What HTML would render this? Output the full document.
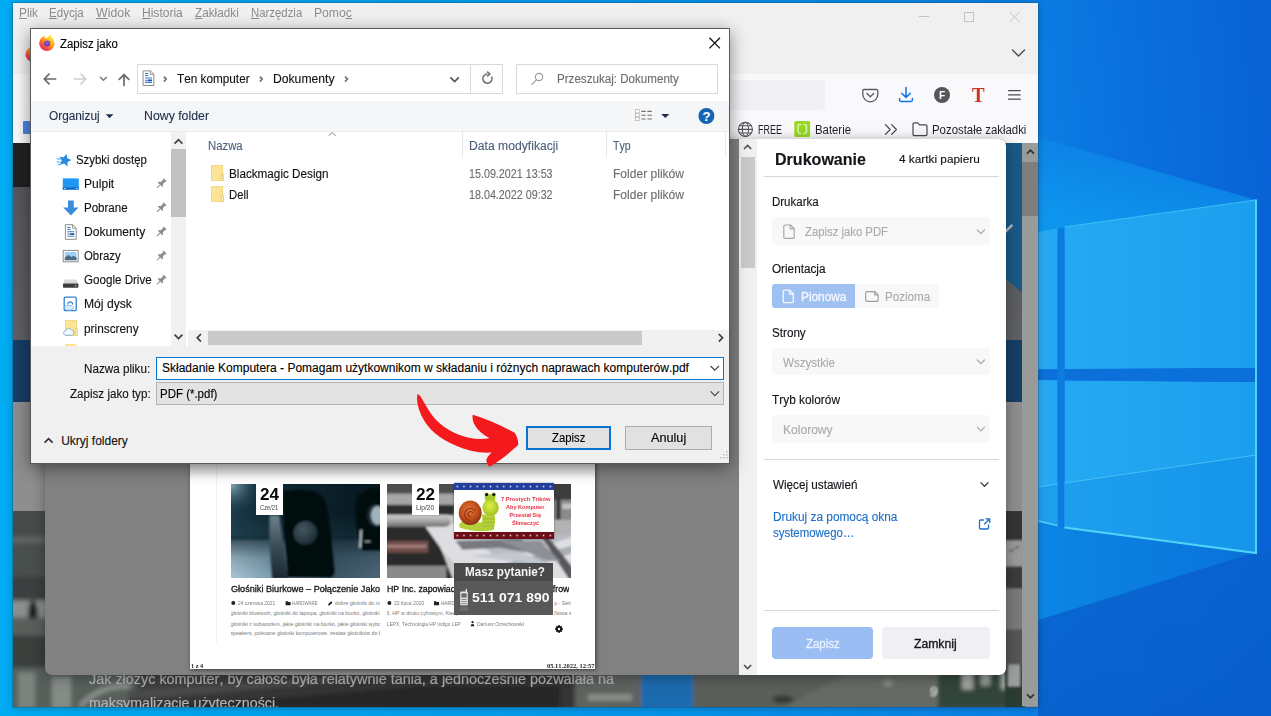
<!DOCTYPE html>
<html lang="pl"><head><meta charset="utf-8"><title>Zapisz jako</title>
<style>
html,body{margin:0;padding:0;}
body{width:1271px;height:716px;overflow:hidden;background:#0a78de;font-family:"Liberation Sans",sans-serif;}
#screen{position:relative;width:1271px;height:716px;overflow:hidden;}
#screen *{box-sizing:border-box;}
.abs,.t,.wall,svg.i{position:absolute;}
.wall{left:0;top:0;}
.t{white-space:nowrap;line-height:1;transform-origin:0 0;font-kerning:none;}
u{text-decoration:underline;text-underline-offset:1px;}

#savedialog .t{-webkit-text-stroke:.12px currentColor;}
#printsettings .t{-webkit-text-stroke:.15px currentColor;}

</style></head>
<body>
<div id="screen">
<svg class="wall" width="1271" height="716" viewBox="0 0 1271 716">
<defs>
<linearGradient id="wg" x1="0" y1="0" x2="1271" y2="0" gradientUnits="userSpaceOnUse">
<stop offset="0" stop-color="#00acf2"/><stop offset="0.02" stop-color="#00aaf0"/><stop offset="0.4" stop-color="#069ceb"/><stop offset="0.82" stop-color="#0b7ee4"/><stop offset="0.9" stop-color="#0a70de"/><stop offset="1" stop-color="#0863d6"/>
</linearGradient>
<linearGradient id="wv" x1="0" y1="0" x2="0" y2="716" gradientUnits="userSpaceOnUse">
<stop offset="0" stop-color="#0450c0" stop-opacity="0.06"/><stop offset="0.3" stop-color="#0450c0" stop-opacity="0"/><stop offset="0.75" stop-color="#0450c0" stop-opacity="0"/><stop offset="1" stop-color="#0448b8" stop-opacity="0.45"/>
</linearGradient>
<linearGradient id="beam1" x1="1120" y1="160" x2="1100" y2="232" gradientUnits="userSpaceOnUse">
<stop offset="0" stop-color="#0c84e6"/><stop offset="1" stop-color="#0e96ee"/>
</linearGradient>
<linearGradient id="pane" x1="1038" y1="0" x2="1256" y2="0" gradientUnits="userSpaceOnUse">
<stop offset="0" stop-color="#27aaf3"/><stop offset="1" stop-color="#1a9fee"/>
</linearGradient>
<linearGradient id="pane2" x1="1038" y1="0" x2="1256" y2="0" gradientUnits="userSpaceOnUse">
<stop offset="0" stop-color="#1f9fee"/><stop offset="1" stop-color="#1596ea"/>
</linearGradient>
<linearGradient id="beam2" x1="1038" y1="0" x2="1256" y2="0" gradientUnits="userSpaceOnUse">
<stop offset="0" stop-color="#0b86e4"/><stop offset="1" stop-color="#0a72da"/>
</linearGradient>
</defs>
<rect width="1271" height="716" fill="url(#wg)"/>
<rect x="1038" width="233" height="716" fill="url(#wv)"/>
<!-- dark floor lower right -->
<polygon points="1038,620 1257,552 1271,548 1271,716 1038,716" fill="#0a62cc" opacity="0.75"/>
<!-- beams -->
<polygon points="1038,137 1256,200 1256,240 1038,240" fill="url(#beam1)"/>
<polygon points="1038,520 1256,552 1038,620" fill="url(#beam2)"/>
<!-- separators (darker cross) -->
<rect x="1038" y="225" width="219" height="330" fill="#0d74dc" opacity="0"/>
<!-- panes -->
<polygon points="1038,232 1057.5,228.5 1057.5,369 1038,369.5" fill="url(#pane)"/>
<polygon points="1064.5,227 1256,200 1256,368 1064.5,369" fill="url(#pane)"/>
<polygon points="1038,380 1057.5,380 1057.5,525.5 1038,521" fill="url(#pane)"/>
<polygon points="1064.5,380.5 1256,382 1256,553 1064.5,527.5" fill="url(#pane)"/>
<!-- cross bars -->
<polygon points="1038,369.500 1256,368 1256,382 1038,380" fill="#0b70da"/>
<polygon points="1057.500,228.500 1064.500,227 1064.500,527.500 1057.500,525.500" fill="#0d7ce0"/>
<!-- floor reflection in lower panes -->
<polygon points="1038,487 1057.5,484 1057.5,525.5 1038,521" fill="url(#pane2)"/>
<polygon points="1064.5,483 1256,455 1256,553 1064.5,527.5" fill="url(#pane2)"/>
<polyline points="1038,487 1057.5,484" stroke="#46c0f6" stroke-width="1" fill="none"/>
<polyline points="1064.5,483 1256,455" stroke="#46c0f6" stroke-width="1" fill="none"/>
<!-- bright edges -->
<polyline points="1064.5,227 1256,200" stroke="#3cc0f5" stroke-width="1" fill="none"/>
<polyline points="1256,199.5 1256,553 1064.5,527.5" stroke="#4fd4f7" stroke-width="2" fill="none" stroke-linejoin="miter"/>
<polyline points="1038,521 1057.5,525.5" stroke="#4fd4f7" stroke-width="1.5" fill="none"/>
</svg>
<div class="abs" id="ffwin" style="left:13px;top:3px;width:1025px;height:703.7px;background:#f0f0f1;box-shadow:0 0 0 1px rgba(30,60,90,.22),0 1px 7px rgba(0,0,0,.28);overflow:hidden;">
<div class="abs" id="menubar" style="left:0;top:0;width:1025px;height:23px;"><span class="t" style="left:6.00px;top:4.00px;font-size:12px;color:#8b8b8e;transform:scaleX(0.9826);"><u>P</u>lik</span><span class="t" style="left:36.30px;top:4.00px;font-size:12px;color:#8b8b8e;transform:scaleX(0.9634);"><u>E</u>dycja</span><span class="t" style="left:82.70px;top:4.00px;font-size:12px;color:#8b8b8e;transform:scaleX(1.0288);"><u>W</u>idok</span><span class="t" style="left:129.00px;top:4.00px;font-size:12px;color:#8b8b8e;transform:scaleX(1.0030);"><u>H</u>istoria</span><span class="t" style="left:181.90px;top:4.00px;font-size:12px;color:#8b8b8e;transform:scaleX(0.9802);"><u>Z</u>akładki</span><span class="t" style="left:237.80px;top:4.00px;font-size:12px;color:#8b8b8e;transform:scaleX(0.9477);"><u>N</u>arzędzia</span><span class="t" style="left:300.70px;top:4.00px;font-size:12px;color:#8b8b8e;transform:scaleX(1.0121);">Pomo<u>c</u></span></div>
<svg class="i" style="left:11px;top:42px" width="20" height="20" viewBox="24 45 20 20"><defs><linearGradient id="fxb" x1="0.85" y1="0.1" x2="0.2" y2="0.95"><stop offset="0" stop-color="#fff04a"/><stop offset="0.28" stop-color="#ffb92a"/><stop offset="0.55" stop-color="#ff7a20"/><stop offset="0.8" stop-color="#f2404a"/><stop offset="1" stop-color="#e42a78"/></linearGradient><radialGradient id="fxbp" cx="0.55" cy="0.4" r="0.6"><stop offset="0" stop-color="#9560e6"/><stop offset="1" stop-color="#5a30b8"/></radialGradient></defs><g transform="translate(33.2 54.4)"><circle r="7.7" fill="url(#fxb)"/><path d="M-2.6-8.2l1.2 3.4 3.4-1.6 1.2-2.6z" fill="#fff"/><path d="M1.4-6.4q1.2-2 3-2.4q-.6 1.6 0 3z" fill="#ffe23a"/><circle cx="0.2" cy="0.3" r="3" fill="url(#fxbp)"/><path d="M-3.4-1.2q1.2-3 4.2-3.2q-1.6 1-1.4 2.2q-1.8 0-2.8 1z" fill="#ff9a2a"/></g></svg>
<svg class="i" style="left:902px;top:5px" width="112" height="20" viewBox="915 8 112 20" fill="none" stroke="#c4c4c8" stroke-width="1"><path d="M919 16.5h10"/><rect x="964.5" y="12.5" width="9" height="9"/><path d="M1009.5 12l10 10M1019.5 12l-10 10"/></svg>
<svg class="i" style="left:997px;top:43px" width="18" height="14" viewBox="1010 46 18 14" fill="none" stroke="#4a4a4f" stroke-width="1.4" stroke-linecap="round" stroke-linejoin="round"><path d="M1012.5 50l6 6 6-6"/></svg>
<div class="abs" style="left:0px;top:71px;width:1025px;height:43px;background:#f9f9fb;"></div>
<div class="abs" style="left:287px;top:77px;width:525px;height:30px;background:#f0f0f4;border-radius:4px;"></div>
<svg class="i" style="left:845px;top:81px" width="170" height="22" viewBox="858 84 170 22" fill="none" stroke-linecap="round" stroke-linejoin="round">
<path d="M864 89.5h12.6a1.2 1.2 0 0 1 1.2 1.2v3.6a7.5 7.5 0 0 1-15 0v-3.6a1.2 1.2 0 0 1 1.2-1.2z" stroke="#5b5b66" stroke-width="1.3"/>
<path d="M867 93.6l3.3 3.2 3.3-3.2" stroke="#5b5b66" stroke-width="1.4"/>
<path d="M906 87.5v9.6M901.7 93.2l4.3 4.2 4.3-4.2" stroke="#1373e6" stroke-width="1.5"/>
<path d="M899.6 98.4v1.6a1.4 1.4 0 0 0 1.4 1.4h10a1.4 1.4 0 0 0 1.4-1.4v-1.6" stroke="#1373e6" stroke-width="1.5"/>
<circle cx="942" cy="95" r="8" fill="#55555c"/>
<path d="M1008.6 90.6h11.6M1008.6 94.9h11.6M1008.6 99.2h11.6" stroke="#4a4a52" stroke-width="1.3"/>
</svg>
<span class="t" style="left:926.05px;top:87.60px;font-size:10px;color:#fff;font-weight:700;">F</span><span class="t" style="left:959.20px;top:82.00px;font-size:21px;color:#d0311d;font-weight:700;font-family:'Liberation Serif',serif;transform:scaleX(0.8995);">T</span><div class="abs" style="left:0px;top:114px;width:1025px;height:26px;background:#f9f9fb;"></div>
<div class="abs" style="left:10px;top:118px;width:9px;height:13px;background:#4a86e8;border-radius:1px;"></div>
<svg class="i" style="left:723px;top:116px" width="200" height="20" viewBox="736 119 200 20" fill="none" stroke-linecap="round" stroke-linejoin="round">
<g stroke="#55555e" stroke-width="1.1"><circle cx="745.4" cy="129.4" r="7"/><ellipse cx="745.4" cy="129.4" rx="3" ry="7"/><path d="M738.4 129.4h14M739.5 125.8h11.8M739.5 133h11.8"/></g>
<rect x="794.3" y="121" width="15.8" height="16" rx="1.5" fill="#97d826"/>
<rect x="798" y="124.6" width="8.4" height="8.8" rx="1.6" stroke="#dff5a8" stroke-width="1.5"/>
<path d="M802.2 123.6v10.8" stroke="#97d826" stroke-width="2.2"/>
<g stroke="#45454d" stroke-width="1.2"><path d="M885.4 124.6l4.8 4.9-4.8 4.9M891.6 124.6l4.8 4.9-4.8 4.9"/></g>
<path d="M913 124.2a1.3 1.3 0 0 1 1.3-1.3h3.4l1.8 1.9h6.2a1.3 1.3 0 0 1 1.3 1.3v8.2a1.3 1.3 0 0 1-1.3 1.3h-11.4a1.3 1.3 0 0 1-1.3-1.3z" stroke="#45454d" stroke-width="1.2"/>
</svg>
<span class="t" style="left:744.80px;top:120.50px;font-size:12px;color:#1f1f24;transform:scaleX(0.7468);">FREE</span><span class="t" style="left:801.50px;top:120.50px;font-size:12px;color:#1f1f24;transform:scaleX(0.9468);">Baterie</span><span class="t" style="left:918.60px;top:120.50px;font-size:12px;color:#1f1f24;transform:scaleX(0.9498);">Pozostałe zakładki</span><div class="abs" id="content" style="left:0;top:140px;width:1025px;height:564px;background:#8e8e8e;overflow:hidden;">
<div class="abs" style="left:0px;top:0px;width:400px;height:43.5px;background:#212122;"></div>
<div class="abs" style="left:400px;top:0px;width:612px;height:160px;background:#1a5a88;"></div>
<div class="abs" style="left:0px;top:43.5px;width:1012px;height:154px;background:linear-gradient(#57585c,#5e6064);"></div>
<svg class="i" style="left:887px;top:0" width="125" height="160" viewBox="900 143 125 160"><polygon points="900,143 1025,143 1025,295 900,190" fill="#1a5a88"/><path d="M1004 231.500l7.500-7.500 1.600 1.800-7.500 7.500z" fill="#b4bec8"/></svg><div class="abs" style="left:0px;top:197px;width:1012px;height:62px;background:#173e66;"></div>
<div class="abs" style="left:0px;top:367.5px;width:1012px;height:196px;background:#4b4f4c;"></div>
<svg class="i" style="left:0;top:367.5px" width="1009" height="196" viewBox="13 510.5 1009 196">
<defs><filter id="pb" x="-5%" y="-5%" width="110%" height="110%"><feGaussianBlur stdDeviation="2"/></filter>
<filter id="pb1" x="-5%" y="-5%" width="110%" height="110%"><feGaussianBlur stdDeviation="1.1"/></filter>
<linearGradient id="pg1" x1="13" x2="1022" y1="0" y2="0" gradientUnits="userSpaceOnUse"><stop offset="0" stop-color="#4f5553"/><stop offset="0.1" stop-color="#59605b"/><stop offset="0.13" stop-color="#3f4140"/><stop offset="0.3" stop-color="#383838"/><stop offset="0.5" stop-color="#2c2c2c"/><stop offset="0.56" stop-color="#555955"/><stop offset="1" stop-color="#5d625e"/></linearGradient></defs>
<rect x="13" y="510.5" width="1009" height="196" fill="url(#pg1)"/>
<g filter="url(#pb)">
<rect x="10" y="508" width="38" height="30" fill="#464c4a"/>
<rect x="10" y="536" width="38" height="7" fill="#5e6462"/>
<rect x="10" y="543" width="38" height="33" fill="#4a504e"/>
<rect x="10" y="576" width="38" height="24" fill="#3c403f"/>
<rect x="10" y="600" width="38" height="17" fill="#8b8f8d"/>
<ellipse cx="33" cy="614" rx="5" ry="14" fill="#1e201f"/>
<rect x="10" y="618" width="38" height="17" fill="#5a5e5c"/>
<rect x="10" y="635" width="38" height="32" fill="#3b3f3d"/>
<rect x="10" y="667" width="125" height="42" fill="#59605b"/>
<rect x="18" y="672" width="17" height="36" fill="#7c837e"/>
<rect x="52" y="676" width="19" height="32" fill="#858c87"/>
<path d="M80 706q20-22 50-20" stroke="#8a918c" stroke-width="5" fill="none"/>
<polygon points="128,708 128,690 400,672 575,672 575,708" fill="#343434"/>
<polygon points="150,708 420,686 560,686 560,708" fill="#262626"/>
<polygon points="128,700 128,690 400,672 440,672" fill="#4a4c4a"/>
<rect x="575" y="672" width="66" height="36" fill="#5f635f"/>
<rect x="588" y="694" width="44" height="6" fill="#8e928e"/>
<rect x="641" y="666" width="52" height="44" fill="#1c6aae"/>
<rect x="693" y="672" width="330" height="36" fill="#5a5f5a"/>
<polygon points="780,708 850,672 1012,672 1012,708" fill="#656a65"/>
<rect x="938" y="672" width="74" height="36" fill="#33443b"/>
<rect x="962" y="672" width="11" height="17" fill="#a0a4a0"/>
<rect x="981" y="672" width="9" height="13" fill="#9a9e9a"/>
<rect x="1001" y="672" width="11" height="17" fill="#a0a4a0"/>
<ellipse cx="783" cy="699" rx="11" ry="4" fill="#343434"/>
<ellipse cx="888" cy="683" rx="5" ry="2.5" fill="#8c908c"/>
<ellipse cx="1018" cy="699" rx="10" ry="3.5" fill="#3c3c3c"/>
</g>
<g filter="url(#pb1)">
<rect x="1005" y="509" width="18" height="31" fill="#353535"/>
<rect x="1005" y="540" width="18" height="26" fill="#9a9a9a"/>
<path d="M1009 551l5-2M1015 548l4-2" stroke="#3a3a3a" stroke-width="1.2"/>
<rect x="1005" y="566" width="18" height="22" fill="#3a3a3a"/>
<rect x="1005" y="588" width="18" height="41" fill="#7a7a7a"/>
<rect x="1005" y="629" width="18" height="35" fill="#565656"/>
<rect x="1005" y="664" width="18" height="44" fill="#2c3a33"/>
<rect x="1008" y="664" width="12" height="22" fill="#9a9e9c"/>
</g>
<text x="918" y="695" font-family="Liberation Sans, sans-serif" font-weight="700" font-size="15" fill="#c8ccc8" transform="rotate(190 928 690)" filter="url(#pb1)">6</text>
</svg>
<div class="abs" style="left:1008.5px;top:0px;width:17px;height:563px;background:#999a9a;"></div>
<div class="abs" style="left:1008.5px;top:18.5px;width:17px;height:54px;background:#7e7e7f;"></div>
<svg class="i" style="left:1008.5px;top:0" width="17" height="563" viewBox="0 0 17 563" fill="none" stroke="#2e2e2e" stroke-width="1.5"><path d="M5 10.6l3.5-3.5 3.5 3.5"/><path d="M5 551.4l3.5 3.5 3.5-3.5"/></svg><span class="t" style="left:76.00px;top:527.50px;font-size:15px;color:#b2b2b2;transform:scaleX(0.9598);-webkit-text-stroke:.2px #b2b2b2;">Jak złożyć komputer, by całość była relatywnie tania, a jednocześnie pozwalała na</span><span class="t" style="left:76.00px;top:552.20px;font-size:15px;color:#b2b2b2;transform:scaleX(0.9497);-webkit-text-stroke:.2px #b2b2b2;">maksymalizację użyteczności.</span></div>
</div>
<div class="abs" id="printmodal" style="left:45px;top:139px;width:961px;height:535.5px;background:#818181;border-radius:7px;overflow:hidden;box-shadow:0 2px 14px rgba(0,0,0,.35);">
<div class="abs" id="sheet" style="left:145px;top:11px;width:404.5px;height:518.8px;background:#fff;box-shadow:1px 1px 4px rgba(0,0,0,.55);overflow:hidden;">
<div class="abs" style="left:26.30px;top:0.00px;width:1px;height:493px;background:#f3f3f3;"></div>
<div class="abs" style="left:0.00px;top:313.00px;width:405px;height:16px;background:linear-gradient(rgba(0,0,0,.16),rgba(0,0,0,0));"></div>
<svg class="i" style="left:41px;top:334.2px" width="149.3" height="93.5" viewBox="231 484.2 149.3 93.5">
<defs>
<linearGradient id="s1" x1="231" x2="380" y1="0" y2="0" gradientUnits="userSpaceOnUse"><stop offset="0" stop-color="#1b3a48"/><stop offset="0.3" stop-color="#0e2732"/><stop offset="1" stop-color="#071821"/></linearGradient>
<linearGradient id="s2" x1="231" x2="380" y1="0" y2="0" gradientUnits="userSpaceOnUse"><stop offset="0" stop-color="#a9c6d4"/><stop offset="0.28" stop-color="#7b9db0"/><stop offset="0.7" stop-color="#3d5666"/><stop offset="1" stop-color="#4b6778"/></linearGradient>
<linearGradient id="s3" x1="0" x2="0" y1="538" y2="578" gradientUnits="userSpaceOnUse"><stop offset="0" stop-color="#10242e" stop-opacity=".75"/><stop offset="0.5" stop-color="#10242e" stop-opacity=".2"/><stop offset="1" stop-color="#10242e" stop-opacity="0"/></linearGradient>
<radialGradient id="s4" cx="232" cy="485" r="30" gradientUnits="userSpaceOnUse"><stop offset="0" stop-color="#7fa3b3"/><stop offset="1" stop-color="#1b3a48" stop-opacity="0"/></radialGradient>
<linearGradient id="s5" x1="0" x2="0" y1="515" y2="543" gradientUnits="userSpaceOnUse"><stop offset="0" stop-color="#2a5262" stop-opacity="0"/><stop offset="1" stop-color="#2a5262" stop-opacity=".3"/></linearGradient>
<linearGradient id="s6" x1="0" x2="0" y1="515" y2="578" gradientUnits="userSpaceOnUse"><stop offset="0" stop-color="#6c828c"/><stop offset="0.5" stop-color="#3a4c56"/><stop offset="1" stop-color="#1c2a32"/></linearGradient>
<radialGradient id="s7" cx="0.38" cy="0.34" r="0.75"><stop offset="0" stop-color="#42565f"/><stop offset="0.7" stop-color="#26363e"/><stop offset="1" stop-color="#121c22"/></radialGradient>
<filter id="sb"><feGaussianBlur stdDeviation="0.8"/></filter>
</defs>
<rect x="231" y="484" width="150" height="95" fill="url(#s1)"/>
<rect x="231" y="515" width="150" height="28" fill="url(#s5)"/>
<rect x="231" y="484" width="40" height="40" fill="url(#s4)"/>
<g filter="url(#sb)">
<rect x="229" y="540" width="153" height="40" fill="url(#s2)"/>
<rect x="229" y="538" width="153" height="42" fill="url(#s3)"/>
<path d="M279.300 515.500l-9.800 0q-1 30 2.500 64l16 0z" fill="url(#s6)"/>
<path d="M283.500 493q4-3 21.500-2.300q16 .6 20.500 11.500q6 30 9.300 68q.4 6-4 8l-43 0q-4.500-40-4.300-85.200z" fill="#03070b"/>
<circle cx="305.600" cy="533.400" r="12.100" fill="url(#s7)"/>
<path d="M356.200 500q4-11 25-12v63l-19 0q-8-24-6-51z" fill="#05090d"/>
<ellipse cx="375.500" cy="515.600" rx="8.500" ry="11.500" fill="#1a2a32"/>
<ellipse cx="377.500" cy="515.600" rx="6.500" ry="9.500" fill="#9fb4be"/>
<path d="M360.300 530l1.600 0 -.8 18-1.800 0z" fill="#cfd9de"/>
<path d="M364.500 541.600h6" stroke="#b9c6cc" stroke-width="1"/>
</g>
</svg>
<svg class="i" style="left:196.6px;top:334.2px" width="184.1" height="93.5" viewBox="386.6 484.2 184.1 93.5">
<defs><filter id="pb2"><feGaussianBlur stdDeviation="1.3"/></filter>
<linearGradient id="p1" x1="0" x2="0" y1="515" y2="527" gradientUnits="userSpaceOnUse"><stop offset="0" stop-color="#d0d0d0"/><stop offset="0.5" stop-color="#a8a8a8"/><stop offset="1" stop-color="#6a6a6a"/></linearGradient></defs>
<rect x="386" y="484" width="186" height="95" fill="#c9c9cb"/>
<g filter="url(#pb2)">
<polygon points="420,528 575,510 575,580 470,580" fill="#dedee2"/>
<polygon points="480,545 575,520 575,536 500,560" fill="#b8bcc4"/>
<polygon points="500,565 575,545 575,552 520,572" fill="#a9adb5"/>
<rect x="384" y="482" width="190" height="12" fill="#4e4e4e"/>
<rect x="384" y="494" width="70" height="11" fill="#a6a6a6"/>
<rect x="384" y="505" width="70" height="10" fill="#2e2e2e"/>
<rect x="454" y="494" width="120" height="30" fill="#7c7c7c"/>
<rect x="384" y="515" width="66" height="12" rx="5" fill="url(#p1)"/>
<polygon points="384,527 425,527 440,548 452,580 384,580" fill="#2b2b2b"/>
<rect x="386" y="541" width="42" height="12" fill="#6e4d49"/>
<rect x="386" y="545" width="40" height="3" fill="#a8807a"/>
<rect x="384" y="566" width="62" height="14" fill="#8a8a8a"/>
<rect x="552" y="482" width="24" height="19" fill="#3c3c3c"/>
<rect x="552" y="500" width="24" height="21" fill="#8a8a8a"/>
<rect x="556" y="498" width="4" height="22" fill="#303030"/>
<rect x="562" y="504" width="14" height="5" fill="#c4c4c4"/>
<rect x="552" y="520" width="24" height="15" fill="#b2b2b4"/>
<polygon points="541,537 546,535 575,571 575,580 569,580" fill="#58585c"/>
<polygon points="455,541 520,539 548,556 500,548 462,550" fill="#77797f"/>
<polygon points="500,541 540,541 560,562 545,560" fill="#8d9097"/>
<polygon points="470,556 520,552 552,566 520,562" fill="#c2c7d0"/>
</g>
</svg>
<div class="abs" style="left:65.60px;top:334.20px;width:27.3px;height:30.8px;background:#fff;"></div>
<span class="t" style="left:69.80px;top:336.60px;font-size:16px;color:#0a0a0a;font-weight:700;transform:scaleX(1.0676);">24</span><span class="t" style="left:70.05px;top:354.80px;font-size:6.3px;color:#444;transform:scaleX(0.9168);">Cze/21</span><div class="abs" style="left:221.80px;top:334.20px;width:27.3px;height:30.8px;background:#fff;"></div>
<span class="t" style="left:226.00px;top:336.60px;font-size:16px;color:#0a0a0a;font-weight:700;transform:scaleX(1.0676);">22</span><span class="t" style="left:226.25px;top:354.80px;font-size:6.3px;color:#444;transform:scaleX(1.0661);">Lip/20</span><div class="abs" style="left:40.00px;top:430.00px;width:150.3px;height:16px;overflow:hidden;"><span class="t" style="left:0.50px;top:3.80px;font-size:9.4px;color:#141414;transform:scaleX(0.9732);-webkit-text-stroke:.3px #141414;">Głośniki Biurkowe – Połączenie Jakości</span></div>
<div class="abs" style="left:196.00px;top:430.00px;width:183.3px;height:16px;overflow:hidden;"><span class="t" style="left:0.60px;top:3.80px;font-size:9.4px;color:#141414;transform:scaleX(0.9411);-webkit-text-stroke:.3px #141414;">HP Inc. zapowiada nowe prasy w druku cyfrowym</span></div>
<span class="t" style="left:48.00px;top:450.90px;font-size:5.2px;color:#7b7b7b;transform:scaleX(0.9488);">24 czerwca 2021</span><span class="t" style="left:102.30px;top:450.90px;font-size:5.2px;color:#7b7b7b;transform:scaleX(0.8472);">HARDWARE</span><div class="abs" style="left:145.00px;top:448.90px;width:45.3px;height:9px;overflow:hidden;"><span class="t" style="left:0.00px;top:2.00px;font-size:5.2px;color:#7b7b7b;">dobre głośniki do monitora,</span></div>
<div class="abs" style="left:40.50px;top:459.00px;width:149.8px;height:9px;overflow:hidden;"><span class="t" style="left:0.00px;top:2.00px;font-size:5.2px;color:#7b7b7b;">głośniki bluetooth, głośniki do laptopa, głośniki na biurko, głośniki</span></div>
<div class="abs" style="left:40.50px;top:469.50px;width:149.8px;height:9px;overflow:hidden;"><span class="t" style="left:0.00px;top:2.00px;font-size:5.2px;color:#7b7b7b;">głośniki z subwoofem, jakie głośniki na biurko, jakie głośniki wybo</span></div>
<div class="abs" style="left:40.50px;top:479.40px;width:149.8px;height:9px;overflow:hidden;"><span class="t" style="left:0.00px;top:2.00px;font-size:5.2px;color:#7b7b7b;">speakers, polecane głośniki komputerowe, zestaw głośników do ko</span></div>
<span class="t" style="left:204.30px;top:450.90px;font-size:5.2px;color:#7b7b7b;transform:scaleX(0.9859);">22 lipca 2020</span><div class="abs" style="left:250.60px;top:448.90px;width:130px;height:9px;overflow:hidden;"><span class="t" style="left:0.00px;top:2.00px;font-size:5.2px;color:#7b7b7b;">HARDWARE</span></div>
<div class="abs" style="left:364.20px;top:448.90px;width:16.5px;height:9px;overflow:hidden;"><span class="t" style="left:0.00px;top:2.00px;font-size:5.2px;color:#7b7b7b;">p - Seria</span></div>
<div class="abs" style="left:196.60px;top:459.00px;width:70px;height:9px;overflow:hidden;"><span class="t" style="left:0.00px;top:2.00px;font-size:5.2px;color:#7b7b7b;">6, HP w druku cyfrowym, Kiedy</span></div>
<div class="abs" style="left:364.20px;top:459.00px;width:16.5px;height:9px;overflow:hidden;"><span class="t" style="left:0.00px;top:2.00px;font-size:5.2px;color:#7b7b7b;">Nowa se</span></div>
<span class="t" style="left:196.60px;top:471.50px;font-size:5.2px;color:#7b7b7b;transform:scaleX(0.9241);">LEPX, Technologia HP Indigo LEP</span><span class="t" style="left:286.50px;top:471.50px;font-size:5.2px;color:#7b7b7b;transform:scaleX(0.9604);">Dariusz Orzechowski</span><svg class="i" style="left:40px;top:449px" width="260" height="30" viewBox="230 598 260 30" fill="#222">
<circle cx="233.3" cy="602" r="2"/><circle cx="389.4" cy="602" r="2"/>
<path d="M285.6 600.2h2l.8.9h2.2v3.2h-5z"/><path d="M434 600.2h2l.8.9h2.2v3.2h-5z"/>
<path d="M328 603.6l2.6-3.2 1.6.6-.4 1.6-3 2.2z"/>
<circle cx="472.5" cy="621.2" r="1.1"/><path d="M470.6 625.2a1.9 2.2 0 0 1 3.8 0z"/>
</svg>
<div class="abs" style="left:263.90px;top:333.00px;width:99.8px;height:55.6px;background:#fdfdfb;box-shadow:0 0 2px rgba(0,0,0,.4);"></div>
<div class="abs" style="left:263.90px;top:333.00px;width:99.8px;height:6.6px;background:#233f9e;background-image:radial-gradient(circle,#e8ecff 0,#e8ecff .8px,transparent 1.1px);background-size:6.65px 6.6px;"></div>
<div class="abs" style="left:263.90px;top:382.00px;width:99.8px;height:6.6px;background:#6d0d17;background-image:radial-gradient(circle,#f0dede 0,#f0dede .8px,transparent 1.1px);background-size:6.65px 6.6px;"></div>
<svg class="i" style="left:265px;top:340px" width="46" height="42" viewBox="455 490 46 42">
<defs><radialGradient id="sh" cx="0.45" cy="0.4" r="0.6"><stop offset="0" stop-color="#e27a3a"/><stop offset="0.6" stop-color="#c4501c"/><stop offset="1" stop-color="#8a3210"/></radialGradient>
<radialGradient id="gr" cx="0.45" cy="0.4" r="0.6"><stop offset="0" stop-color="#dff04a"/><stop offset="1" stop-color="#9fc21f"/></radialGradient><filter id="snb"><feGaussianBlur stdDeviation="0.35"/></filter></defs>
<g filter="url(#snb)">
<path d="M459.500 527.500q-1.500-5 4-6l18.500 1q.5-4 0-8l12.500 0q1.500 8-1 15.500q-16 3.500-34-2.500z" fill="#b4d038"/>
<path d="M483 518.800h11.500M482.500 522.400h12M482 526h12" stroke="#92b222" stroke-width=".7" fill="none"/>
<path d="M484.600 494.600q0-2 2-2q1.600 0 1.900 1.600l3.300 0q.3-1.600 1.900-1.600q2 0 2 2l-.8 7-9.500 0z" fill="#a9cb2c"/>
<circle cx="490.600" cy="507.600" r="8.200" fill="url(#gr)"/>
<circle cx="486.600" cy="494.600" r="1.600" fill="#161616"/><circle cx="493.800" cy="494.600" r="1.600" fill="#161616"/>
<ellipse cx="470.200" cy="512.800" rx="11.500" ry="12.200" fill="url(#sh)"/>
<path d="M470.500 520.500a6 6 0 1 1 5-9.500M470.500 516.800a2.600 2.600 0 1 1 2.400-3.800" fill="none" stroke="#8e3512" stroke-width="1.100"/>
</g></svg>
<span class="t" style="left:310.60px;top:347.00px;font-size:5.6px;color:#e0344a;font-weight:700;transform:scaleX(1.0241);">7 Prostych Trików</span><span class="t" style="left:316.10px;top:354.90px;font-size:5.6px;color:#e0344a;font-weight:700;transform:scaleX(0.9953);">Aby Komputer</span><span class="t" style="left:319.60px;top:362.60px;font-size:5.6px;color:#e0344a;font-weight:700;">Przestał Się</span><span class="t" style="left:321.70px;top:370.60px;font-size:5.6px;color:#e0344a;font-weight:700;transform:scaleX(1.0043);">Ślimaczyć</span><div class="abs" style="left:264.00px;top:413.00px;width:99.4px;height:52.2px;background:#585858;"></div>
<div class="abs" style="left:264.00px;top:413.00px;width:99.4px;height:18.2px;background:#494949;"></div>
<span class="t" style="left:275.00px;top:415.60px;font-size:12.8px;color:#f4f4f4;font-weight:700;transform:scaleX(0.9144);">Masz pytanie?</span><span class="t" style="left:282.00px;top:440.80px;font-size:13.6px;color:#fafafa;font-weight:700;transform:scaleX(1.0234);">511 071 890</span><svg class="i" style="left:268px;top:437px" width="12" height="26" viewBox="458 587 12 26">
<rect x="460.2" y="591.6" width="7.6" height="13.6" rx="1" fill="#e4e4e4"/><rect x="465.6" y="589" width="1.4" height="3.4" fill="#e4e4e4"/>
<rect x="461.4" y="593.4" width="5.2" height="4.2" fill="#6a6a6a"/><rect x="461.4" y="599" width="5.2" height="1" fill="#888"/><rect x="461.4" y="601" width="5.2" height="1" fill="#888"/><rect x="461.4" y="603" width="5.2" height="1" fill="#888"/>
<rect x="460.2" y="606.4" width="7.6" height="4.4" fill="#6c6c6c"/></svg>
<svg class="i" style="left:363.5px;top:474px" width="10" height="10" viewBox="-5.5 -5.5 11 11"><g fill="#111"><circle r="3.1"/><rect x="-1" y="-4.2" width="2" height="8.4" transform="rotate(0)"/><rect x="-1" y="-4.2" width="2" height="8.4" transform="rotate(45)"/><rect x="-1" y="-4.2" width="2" height="8.4" transform="rotate(90)"/><rect x="-1" y="-4.2" width="2" height="8.4" transform="rotate(135)"/></g><circle r="1.3" fill="#fff"/></svg>
<span class="t" style="left:0.60px;top:512.70px;font-size:6.4px;color:#222;font-weight:700;font-family:'Liberation Serif',serif;transform:scaleX(0.9887);">1 z 4</span><span class="t" style="left:356.80px;top:512.90px;font-size:6.4px;color:#222;font-weight:700;font-family:'Liberation Serif',serif;transform:scaleX(1.0142);">05.11.2022, 12:57</span></div>
<div class="abs" style="left:694px;top:0px;width:17.5px;height:536px;background:#f0f0f0;"></div>
<div class="abs" style="left:695.5px;top:17.5px;width:14.5px;height:111px;background:#c9c9c9;"></div>
<svg class="i" style="left:694px;top:0" width="17" height="536" viewBox="0 0 17 536" fill="none" stroke="#505050" stroke-width="1.6"><path d="M5 10l3.6-3.6 3.6 3.6"/><path d="M5 526l3.6 3.6 3.6-3.6"/></svg>
<div class="abs" id="printsettings" style="left:711.5px;top:0;width:249.5px;height:535.5px;background:#fff;">
<span class="t" style="left:18.50px;top:12.00px;font-size:17px;color:#15141a;font-weight:700;transform:scaleX(0.9444);">Drukowanie</span><span class="t" style="left:142.80px;top:14.60px;font-size:11.5px;color:#15141a;transform:scaleX(1.0264);">4 kartki papieru</span><div class="abs" style="left:7.5px;top:37px;width:234.5px;height:1px;background:#d7d7db;"></div>
<span class="t" style="left:15.90px;top:56.60px;font-size:12.5px;color:#15141a;transform:scaleX(0.9190);">Drukarka</span><div class="abs" style="left:15.899999999999977px;top:78.4px;width:217.6px;height:27.2px;background:#f8f8f9;border-radius:4px;"></div>
<span class="t" style="left:48.50px;top:85.80px;font-size:13px;color:#ababab;transform:scaleX(0.8704);">Zapisz jako PDF</span><span class="t" style="left:15.90px;top:124.20px;font-size:12.5px;color:#15141a;transform:scaleX(0.9373);">Orientacja</span><div class="abs" style="left:15.899999999999977px;top:145.39999999999998px;width:166.2px;height:23.2px;background:#f8f8f9;border-radius:3px;"></div>
<div class="abs" style="left:15.899999999999977px;top:145.39999999999998px;width:82.9px;height:23.2px;background:#9fc1f1;border-radius:3px 0 0 3px;"></div>
<span class="t" style="left:44.90px;top:151.50px;font-size:12.5px;color:#f2f7fe;transform:scaleX(0.9447);-webkit-text-stroke:.35px #f2f7fe;">Pionowa</span><span class="t" style="left:128.00px;top:151.50px;font-size:12.5px;color:#ababab;transform:scaleX(0.9273);">Pozioma</span><span class="t" style="left:15.90px;top:188.00px;font-size:12.5px;color:#15141a;transform:scaleX(0.9328);">Strony</span><div class="abs" style="left:15.899999999999977px;top:209.39999999999998px;width:217.6px;height:26.4px;background:#f8f8f9;border-radius:4px;"></div>
<span class="t" style="left:26.00px;top:216.70px;font-size:13px;color:#ababab;transform:scaleX(0.8889);">Wszystkie</span><span class="t" style="left:15.90px;top:254.80px;font-size:12.5px;color:#15141a;transform:scaleX(0.9504);">Tryb kolorów</span><div class="abs" style="left:15.899999999999977px;top:276.4px;width:217.6px;height:27.6px;background:#f8f8f9;border-radius:4px;"></div>
<span class="t" style="left:26.00px;top:283.50px;font-size:13px;color:#ababab;transform:scaleX(0.9276);">Kolorowy</span><div class="abs" style="left:7.5px;top:320px;width:234.5px;height:1px;background:#d7d7db;"></div>
<span class="t" style="left:16.10px;top:339.60px;font-size:12.5px;color:#15141a;transform:scaleX(0.9345);">Więcej ustawień</span><span class="t" style="left:16.10px;top:371.80px;font-size:12.5px;color:#1f70c8;transform:scaleX(0.9473);">Drukuj za pomocą okna</span><span class="t" style="left:16.10px;top:387.90px;font-size:12.5px;color:#1f70c8;transform:scaleX(0.9154);">systemowego…</span><div class="abs" style="left:7.5px;top:471.20000000000005px;width:234.5px;height:1px;background:#d7d7db;"></div>
<div class="abs" style="left:15.899999999999977px;top:488.29999999999995px;width:100.6px;height:31.7px;background:#9abef3;border-radius:4px;"></div>
<span class="t" style="left:49.20px;top:499.00px;font-size:12.5px;color:#e9f1fd;transform:scaleX(0.9153);-webkit-text-stroke:.3px #e9f1fd;">Zapisz</span><div class="abs" style="left:125.0px;top:488.29999999999995px;width:108.5px;height:31.7px;background:#f0f0f4;border-radius:4px;"></div>
<span class="t" style="left:157.70px;top:499.00px;font-size:12.5px;color:#15141a;transform:scaleX(0.9735);-webkit-text-stroke:0.35px #15141a;">Zamknij</span><svg class="i" style="left:0;top:0" width="250" height="536" viewBox="756.5 139 250 536" fill="none" stroke-linecap="round" stroke-linejoin="round">
<g stroke="#a8a8ae" stroke-width="1.2">
<path d="M784.5 225h5.6l3.6 3.6v8.6a1.2 1.2 0 0 1-1.2 1.2h-8a1.2 1.2 0 0 1-1.2-1.2v-11a1.2 1.2 0 0 1 1.2-1.2z"/><path d="M789.8 225.2v3.6h3.6"/>
<path d="M976.8 230l3.600 3.600 3.600-3.600"/>
<path d="M976.800 360l3.600 3.600 3.600-3.600"/>
<path d="M976.800 427.200l3.600 3.600 3.600-3.600"/>
</g>
<g stroke="#f2f6fd" stroke-width="1.3">
<path d="M784 290.2h5.2l3.6 3.6v7.6a1.2 1.2 0 0 1-1.2 1.2h-7.6a1.2 1.2 0 0 1-1.2-1.2v-10a1.2 1.2 0 0 1 1.2-1.2z"/><path d="M789 290.4v3.6h3.6"/>
</g>
<g stroke="#9c9ca3" stroke-width="1.2">
<path d="M866.4 291.6h8l3.2 3.2v5.4a1.2 1.2 0 0 1-1.2 1.2h-10a1.2 1.2 0 0 1-1.2-1.2v-7.4a1.2 1.2 0 0 1 1.2-1.2z"/><path d="M874.2 291.8v3.2h3.2"/>
</g>
<path d="M980.400 482.600l3.600 3.600 3.600-3.600" stroke="#3a3a42" stroke-width="1.300"/>
<g stroke="#1f70c8" stroke-width="1.3"><path d="M983 520h-3a1 1 0 0 0-1 1v7a1 1 0 0 0 1 1h7a1 1 0 0 0 1-1v-3"/><path d="M985.4 518.8h3.8v3.8M989 519l-5 5"/></g>
</svg>
</div>
</div>
<div class="abs" id="savedialog" style="left:31px;top:29px;width:698.3px;height:434px;background:#fff;box-shadow:0 0 0 1px #5a5a5c,0 4px 16px 1px rgba(0,0,0,.45);">
<svg class="i" style="left:7px;top:5px" width="18" height="18" viewBox="38 34 18 18" ><defs><linearGradient id="fxa" x1="0.85" y1="0.1" x2="0.2" y2="0.95"><stop offset="0" stop-color="#fff04a"/><stop offset="0.28" stop-color="#ffb92a"/><stop offset="0.55" stop-color="#ff7a20"/><stop offset="0.8" stop-color="#f2404a"/><stop offset="1" stop-color="#e42a78"/></linearGradient><radialGradient id="fxap" cx="0.55" cy="0.4" r="0.6"><stop offset="0" stop-color="#9560e6"/><stop offset="1" stop-color="#5a30b8"/></radialGradient></defs><g transform="translate(46.9 43.2)"><circle r="7.7" fill="url(#fxa)"/><path d="M-2.6-8.2l1.2 3.4 3.4-1.6 1.2-2.6z" fill="#fff"/><path d="M1.4-6.4q1.2-2 3-2.4q-.6 1.6 0 3z" fill="#ffe23a"/><circle cx="0.2" cy="0.3" r="3" fill="url(#fxap)"/><path d="M-3.4-1.2q1.2-3 4.2-3.2q-1.6 1-1.4 2.2q-1.8 0-2.8 1z" fill="#ff9a2a"/></g></svg>
<span class="t" style="left:29.00px;top:8.60px;font-size:12px;color:#000;transform:scaleX(0.9523);">Zapisz jako</span><svg class="i" style="left:675px;top:5px" width="18" height="18" viewBox="706 34 18 18" ><path d="M709.4 37.8l10.6 10.6M720 37.8l-10.6 10.6" stroke="#111" stroke-width="1.3" fill="none"/></svg>
<svg class="i" style="left:9px;top:39px" width="96" height="22" viewBox="40 68 96 22" ><g fill="none" stroke-linecap="round" stroke-linejoin="round" stroke-width="1.7">
<path d="M55.6 79h-11M49 74.2l-4.8 4.8 4.8 4.8" stroke="#6a6a6a"/>
<path d="M74.4 79h11M81 74.2l4.8 4.8-4.8 4.8" stroke="#cfcfcf"/>
<path d="M100.4 77.2l3 3 3-3" stroke="#7a7a7a" stroke-width="1.5"/>
<path d="M124 85.4v-11M119.2 79.4l4.8-4.8 4.8 4.8" stroke="#6a6a6a"/></g></svg>
<div class="abs" style="left:106.00px;top:35.00px;width:366px;height:29.5px;border:1px solid #d9d9d9;background:#fff;"></div>
<div class="abs" style="left:439.00px;top:35.00px;width:1px;height:29.5px;background:#d9d9d9;"></div>
<svg class="i" style="left:109px;top:39px" width="370" height="22" viewBox="140 68 370 22" ><g transform="translate(142.6 70.4)"><path d="M0.5 0.5h7.4l3.4 3.4v11.2h-10.8z" fill="#fff" stroke="#8d8d8d" stroke-width="1"/><path d="M7.7 0.7v3.4h3.4" fill="none" stroke="#8d8d8d" stroke-width=".9"/><path d="M2.4 3.2h3.2M2.4 5.2h3.2" stroke="#2f6fc0" stroke-width="1"/><path d="M2.4 7.6h7M2.4 9.8h7M2.4 12h7" stroke="#3a7bd0" stroke-width="1.1"/><rect x="5.6" y="9.2" width="3.6" height="1.6" fill="#1f4f90"/></g><g fill="none" stroke="#747474" stroke-width="1.600"><path d="M163.800 76.600l2.500 2.500-2.500 2.500"/><path d="M259.800 76.600l2.500 2.500-2.500 2.500"/><path d="M345 76.600l2.500 2.500-2.500 2.500"/></g>
<path d="M450.4 77.4l4.2 4.2 4.2-4.2" fill="none" stroke="#555" stroke-width="1.7"/>
<g fill="none" stroke="#6a6a6a" stroke-width="1.5"><path d="M491.6 76.6a4.6 4.6 0 1 1-4.2-2.6"/><path d="M487.2 71.6l2.6 2.4-2.6 2.4"/></g></svg>
<span class="t" style="left:146.00px;top:43.70px;font-size:12px;color:#111;transform:scaleX(0.9806);">Ten komputer</span><span class="t" style="left:242.00px;top:43.70px;font-size:12px;color:#111;transform:scaleX(1.0133);">Dokumenty</span><div class="abs" style="left:485.00px;top:35.00px;width:201.5px;height:29.5px;border:1px solid #d9d9d9;background:#fff;"></div>
<svg class="i" style="left:497px;top:41px" width="18" height="18" viewBox="528 70 18 18" ><g fill="none" stroke="#9a9a9a" stroke-width="1.2"><circle cx="539" cy="77" r="3.6"/><path d="M536.4 79.8l-5 5"/></g></svg>
<span class="t" style="left:525.80px;top:44.00px;font-size:12px;color:#6d6d6d;transform:scaleX(0.9671);">Przeszukaj: Dokumenty</span><div class="abs" style="left:0.00px;top:72.00px;width:698.3px;height:30.5px;background:#f5f6f7;border-bottom:1px solid #e9eaec;"></div>
<span class="t" style="left:18.40px;top:80.60px;font-size:12px;color:#1e2f4d;transform:scaleX(0.9852);">Organizuj</span><span class="t" style="left:113.00px;top:80.60px;font-size:12px;color:#1e2f4d;transform:scaleX(1.0259);">Nowy folder</span><svg class="i" style="left:69px;top:76px" width="620" height="22" viewBox="100 105 620 22" ><path d="M105.8 114.2h7.6l-3.8 4z" fill="#1e2f4d"/>
<g fill="#fff" stroke="#b4b4b4" stroke-width=".8"><rect x="635.600" y="109.600" width="3.600" height="3.400"/><rect x="635.600" y="113.400" width="3.600" height="3.400"/><rect x="635.600" y="117.200" width="3.600" height="3.400"/></g>
<g stroke="#6e6e6e" stroke-width="1.100"><path d="M641.400 111.400h4.200M647.400 111.400h4.400M641.400 115.200h4.200M647.400 115.200h4.400M641.400 119h4.200M647.400 119h4.400"/></g>
<path d="M661.200 113.900h8.200l-4.100 4.100z" fill="#1e2f4d"/>
<circle cx="706.4" cy="116" r="8" fill="#1464b4"/></svg>
<span class="t" style="left:671.43px;top:80.60px;font-size:13px;color:#fff;font-weight:700;">?</span><div class="abs" style="left:139.80px;top:103.00px;width:15.4px;height:214px;background:#f1f1f1;"></div>
<div class="abs" style="left:139.80px;top:120.30px;width:15.4px;height:67.5px;background:#c2c2c2;"></div>
<svg class="i" style="left:139px;top:105px" width="17" height="212" viewBox="170 134 17 212" ><g fill="none" stroke="#404040" stroke-width="1.7"><path d="M174.6 143.6l3.9-3.9 3.9 3.9"/><path d="M174.6 334.6l3.9 3.9 3.9-3.9"/></g></svg>
<span class="t" style="left:45.40px;top:124.60px;font-size:12px;color:#111;transform:scaleX(0.9490);">Szybki dostęp</span><span class="t" style="left:53.40px;top:148.60px;font-size:12px;color:#111;transform:scaleX(1.0060);">Pulpit</span><span class="t" style="left:53.40px;top:172.70px;font-size:12px;color:#111;transform:scaleX(0.9610);">Pobrane</span><span class="t" style="left:53.40px;top:196.90px;font-size:12px;color:#111;transform:scaleX(1.0084);">Dokumenty</span><span class="t" style="left:53.40px;top:221.00px;font-size:12px;color:#111;transform:scaleX(0.9463);">Obrazy</span><span class="t" style="left:53.40px;top:245.10px;font-size:12px;color:#111;transform:scaleX(0.9667);">Google Drive</span><span class="t" style="left:53.40px;top:269.10px;font-size:12px;color:#111;transform:scaleX(1.0096);">Mój dysk</span><span class="t" style="left:53.40px;top:293.50px;font-size:12px;color:#111;transform:scaleX(0.9863);">prinscreny</span><svg class="i" style="left:23px;top:121px" width="116" height="197" viewBox="54 150 116 197" ><g transform="translate(65 160) rotate(14) scale(1.12)"><path d="M0-5.600l1.700 3.600 3.900.5-2.900 2.700.8 3.900-3.500-1.900-3.500 1.900.8-3.900-2.900-2.700 3.900-.5z" fill="#2a8ce0"/></g><path d="M56.800 158.600l3.600.9M56.600 161.600l3.800.6M58 164.600l3-.2" stroke="#5ab2f2" stroke-width="1.100"/><rect x="62.8" y="178.4" width="16" height="11.2" fill="#2196f3"/><rect x="62.8" y="187.4" width="16" height="2.2" fill="#1069c4"/><rect x="64" y="188" width="1.4" height="1" fill="#cfe6fb"/><rect x="76" y="188" width="1.4" height="1" fill="#cfe6fb"/><path d="M68 200.4h5.8v7h4.8l-7.7 8-7.7-8h4.8z" fill="#3b8ddd"/><g transform="translate(64.9 224.2)"><path d="M0.5 0.5h7.4l3.4 3.4v11.2h-10.8z" fill="#fff" stroke="#8d8d8d" stroke-width="1"/><path d="M7.7 0.7v3.4h3.4" fill="none" stroke="#8d8d8d" stroke-width=".9"/><path d="M2.4 3.2h3.2M2.4 5.2h3.2" stroke="#2f6fc0" stroke-width="1"/><path d="M2.4 7.6h7M2.4 9.8h7M2.4 12h7" stroke="#3a7bd0" stroke-width="1.1"/><rect x="5.6" y="9.2" width="3.6" height="1.6" fill="#1f4f90"/></g><rect x="63.2" y="250.4" width="15" height="11.4" fill="#fff" stroke="#8e8e8e" stroke-width="1"/><rect x="64.8" y="252" width="11.8" height="8.2" fill="#9fd0f5"/><path d="M64.8 260.2v-2.6l3.6-2.6 3 2 2.4-1.2 2.8 2v2.4z" fill="#4c6a80"/><path d="M65 279.4h11.4l2 4.4h-15.4z" fill="#d9d9d9"/><rect x="63" y="283.6" width="15.4" height="4.2" rx=".8" fill="#3c3c3c"/><circle cx="75.6" cy="285.7" r=".9" fill="#58d058"/><rect x="64.2" y="297.2" width="12" height="13.4" rx="1" fill="#fff" stroke="#2f7fd8" stroke-width="1.3"/><path d="M67.6 304.4a2.6 2.6 0 1 1 5.2 0" fill="none" stroke="#2f7fd8" stroke-width="1.2"/><ellipse cx="69" cy="307.8" rx="4.4" ry="2.4" fill="#dcecfb" stroke="#7fb2e8" stroke-width=".8"/><g transform="translate(64.9 320)"><rect x=".4" y=".4" width="11.200" height="15" fill="#fbe496" stroke="#f2d373" stroke-width=".8"/><rect x="10.200" y="9" width="2.200" height="6.400" fill="#fdefb8" stroke="#e8c452" stroke-width=".7"/></g><path d="M65.200 335.200a2.300 2.300 0 0 1 .6-4.500a3 3 0 0 1 5.600-.6a2.600 2.600 0 0 1 .6 5.100z" fill="#f4f9fe" stroke="#6fa8e4" stroke-width=".8"/><rect x="64.900" y="344" width="11.600" height="2" fill="#fbe496"/><g transform="translate(161.4 183.4) rotate(45)"><path d="M-2.2-5.2h4.4v1.1h-.8v3.4l1.8 1.7v.9h-6.4v-.9l1.8-1.7v-3.4h-.8z" fill="#8a8a8a"/><path d="M0 1.9v4.4" stroke="#8a8a8a" stroke-width="1"/></g><g transform="translate(161.4 207.5) rotate(45)"><path d="M-2.2-5.2h4.4v1.1h-.8v3.4l1.8 1.7v.9h-6.4v-.9l1.8-1.7v-3.4h-.8z" fill="#8a8a8a"/><path d="M0 1.9v4.4" stroke="#8a8a8a" stroke-width="1"/></g><g transform="translate(161.4 231.70000000000002) rotate(45)"><path d="M-2.2-5.2h4.4v1.1h-.8v3.4l1.8 1.7v.9h-6.4v-.9l1.8-1.7v-3.4h-.8z" fill="#8a8a8a"/><path d="M0 1.9v4.4" stroke="#8a8a8a" stroke-width="1"/></g><g transform="translate(161.4 255.8) rotate(45)"><path d="M-2.2-5.2h4.4v1.1h-.8v3.4l1.8 1.7v.9h-6.4v-.9l1.8-1.7v-3.4h-.8z" fill="#8a8a8a"/><path d="M0 1.9v4.4" stroke="#8a8a8a" stroke-width="1"/></g><g transform="translate(161.4 279.90000000000003) rotate(45)"><path d="M-2.2-5.2h4.4v1.1h-.8v3.4l1.8 1.7v.9h-6.4v-.9l1.8-1.7v-3.4h-.8z" fill="#8a8a8a"/><path d="M0 1.9v4.4" stroke="#8a8a8a" stroke-width="1"/></g></svg>
<div class="abs" style="left:431.00px;top:103.00px;width:1px;height:25px;background:#e5e5e5;"></div>
<div class="abs" style="left:575.00px;top:103.00px;width:1px;height:25px;background:#e5e5e5;"></div>
<div class="abs" style="left:694.30px;top:103.00px;width:1px;height:25px;background:#ececec;"></div>
<span class="t" style="left:177.00px;top:110.90px;font-size:12px;color:#4c607a;transform:scaleX(0.9433);">Nazwa</span><span class="t" style="left:437.60px;top:110.90px;font-size:12px;color:#4c607a;transform:scaleX(1.0133);">Data modyfikacji</span><span class="t" style="left:581.70px;top:110.90px;font-size:12px;color:#4c607a;transform:scaleX(0.8798);">Typ</span><svg class="i" style="left:295px;top:101px" width="12" height="8" viewBox="326 130 12 8" ><path d="M328.6 135.6l3.6-3 3.6 3" fill="none" stroke="#8a8a8a" stroke-width="1"/></svg>
<svg class="i" style="left:177px;top:133px" width="20" height="42" viewBox="208 162 20 42" ><g transform="translate(211.1 165.1)"><rect x=".4" y=".4" width="11.200" height="15" fill="#fbe496" stroke="#f2d373" stroke-width=".8"/><rect x="10.200" y="9" width="2.200" height="6.400" fill="#fdefb8" stroke="#e8c452" stroke-width=".7"/></g><g transform="translate(211.1 186.2)"><rect x=".4" y=".4" width="11.200" height="15" fill="#fbe496" stroke="#f2d373" stroke-width=".8"/><rect x="10.200" y="9" width="2.200" height="6.400" fill="#fdefb8" stroke="#e8c452" stroke-width=".7"/></g></svg>
<span class="t" style="left:198.00px;top:138.60px;font-size:12px;color:#111;transform:scaleX(0.9751);">Blackmagic Design</span><span class="t" style="left:437.60px;top:138.60px;font-size:12px;color:#6d6d6d;transform:scaleX(0.8948);">15.09.2021 13:53</span><span class="t" style="left:581.70px;top:138.60px;font-size:12px;color:#6d6d6d;transform:scaleX(1.0043);">Folder plików</span><span class="t" style="left:198.00px;top:159.70px;font-size:12px;color:#111;transform:scaleX(0.9384);">Dell</span><span class="t" style="left:437.60px;top:159.70px;font-size:12px;color:#6d6d6d;transform:scaleX(0.8948);">18.04.2022 09:32</span><span class="t" style="left:581.70px;top:159.70px;font-size:12px;color:#6d6d6d;transform:scaleX(1.0043);">Folder plików</span><div class="abs" style="left:157.00px;top:300.60px;width:541.3px;height:16.4px;background:#f1f1f1;"></div>
<div class="abs" style="left:176.80px;top:302.00px;width:434.4px;height:14px;background:#c9c9c9;"></div>
<svg class="i" style="left:159px;top:301px" width="540" height="16" viewBox="190 330 540 16" ><g fill="none" stroke="#404040" stroke-width="1.7"><path d="M201 334l-3.8 3.8 3.8 3.8"/><path d="M718.8 334l3.8 3.8-3.8 3.8"/></g></svg>
<div class="abs" style="left:0.00px;top:317.00px;width:698.3px;height:117px;background:#f0f0f0;"></div>
<span class="t" style="left:53.20px;top:334.20px;font-size:12px;color:#111;transform:scaleX(0.9731);">Nazwa pliku:</span><span class="t" style="left:38.80px;top:358.60px;font-size:12px;color:#111;transform:scaleX(0.9668);">Zapisz jako typ:</span><div class="abs" style="left:125.20px;top:327.60px;width:568px;height:23.2px;background:#fff;border:1px solid #0078d7;"></div>
<span class="t" style="left:131.00px;top:333.20px;font-size:12px;color:#000;">Składanie Komputera - Pomagam użytkownikom w składaniu i różnych naprawach komputerów.pdf</span><div class="abs" style="left:125.20px;top:353.40px;width:568px;height:22.2px;background:#e3e3e3;border:1px solid #b4b4b4;"></div>
<span class="t" style="left:129.20px;top:358.80px;font-size:12px;color:#000;transform:scaleX(0.9565);">PDF (*.pdf)</span><svg class="i" style="left:675px;top:331px" width="16" height="40" viewBox="706 360 16 40" ><g fill="none" stroke="#444" stroke-width="1.2"><path d="M710.6 366l4.2 4.2 4.2-4.2"/><path d="M710.6 391.4l4.2 4.2 4.2-4.2"/></g></svg>
<svg class="i" style="left:11px;top:405px" width="14" height="12" viewBox="42 434 14 12" ><path d="M44.6 442.6l4 -4 4 4" fill="none" stroke="#333" stroke-width="1.7"/></svg>
<span class="t" style="left:30.20px;top:405.60px;font-size:12px;color:#111;">Ukryj foldery</span><div class="abs" style="left:494.80px;top:397.40px;width:85.6px;height:23.8px;background:#e1e1e1;border:2px solid #0a74d6;"></div>
<span class="t" style="left:520.70px;top:402.80px;font-size:12px;color:#000;transform:scaleX(0.9422);">Zapisz</span><div class="abs" style="left:594.00px;top:397.40px;width:86.8px;height:23.8px;background:#e1e1e1;border:1px solid #adadad;"></div>
<span class="t" style="left:619.50px;top:402.80px;font-size:12px;color:#000;transform:scaleX(1.0552);">Anuluj</span><svg class="i" style="left:685px;top:419px" width="14" height="14" viewBox="716 448 14 14" ><g fill="#c4c4c4" transform="translate(0 -1)"><rect x="726" y="458" width="1.6" height="1.6"/><rect x="723" y="458" width="1.6" height="1.6"/><rect x="720" y="458" width="1.6" height="1.6"/><rect x="726" y="455" width="1.6" height="1.6"/><rect x="723" y="455" width="1.6" height="1.6"/><rect x="726" y="452" width="1.6" height="1.6"/></g></svg>
<svg class="i" style="left:379px;top:359px" width="116" height="84" viewBox="410 388 116 84" ><path d="M417.5 394C415.5 402 420 416 428 426C436 436 449 444.5 470 450.5C478 452.6 486 453 491.5 452.6C489 455 486 459 486.4 461C486.8 463.5 488 465.5 489.6 466.8C500 460.5 510 452.5 518.2 445C518.6 441 517 436 514.4 432.6C502 425.5 486 419 472.8 414.8C472 418 473 422 475 425.5C478 430.5 484 435.5 489.6 438.2C483 439.4 476 439.2 470 438C462 436.4 455 433.4 449 430C442 426 436 420.6 432 415C428 409.4 424.5 403.6 422.4 399.6C421 397 419.5 394.8 417.5 394Z" fill="#f4191c"/></svg>
</div>
</div>
</body></html>
